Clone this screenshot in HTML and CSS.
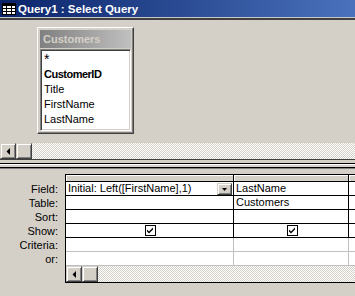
FILE: index.html
```html
<!DOCTYPE html>
<html lang="en">
<head>
    <meta charset="UTF-8">
    <title>Query1 : Select Query</title>
    <link rel="stylesheet" href="styles.css">
</head>
<body>
    <div class="titlebar">
        <svg class="app-icon" width="14" height="12" viewBox="0 0 14 12">
            <rect x="0.5" y="0.5" width="13" height="11" fill="#fff" stroke="#000"/>
            <rect x="1" y="1" width="12" height="2" fill="#000"/>
            <path d="M1 5.5H13M1 8.5H13M4.5 3V11M9.5 3V11" stroke="#000"/>
        </svg>
        <span class="title">Query1 : Select Query</span>
    </div>

    <!-- Table pane -->
    <div class="tables-pane">
        <div class="field-list">
            <div class="field-list-caption">Customers</div>
            <ul class="field-list-items">
                <li class="star">*</li>
                <li class="key">CustomerID</li>
                <li>Title</li>
                <li>FirstName</li>
                <li>LastName</li>
            </ul>
        </div>
    </div>
    <div class="hscroll">
        <div class="sb-btn">
            <svg width="4" height="7" viewBox="0 0 4 7"><path d="M4 0V7L0.5 3.5Z" fill="#000"/></svg>
        </div>
        <div class="sb-thumb"></div>
        <div class="sb-track"></div>
    </div>

    <div class="splitter"></div>

    <!-- Design grid -->
    <div class="design-pane">
        <div class="row-labels">
            <div>Field:</div>
            <div>Table:</div>
            <div>Sort:</div>
            <div>Show:</div>
            <div>Criteria:</div>
            <div>or:</div>
        </div>
        <div class="qbe-grid">
            <div class="col-head"></div>
            <div class="col-head"></div>
            <div class="col-head last"></div>

            <div class="cell field-cell">
                <span>Initial: Left([FirstName],1)</span>
                <span class="drop-btn">
                    <svg width="5" height="3" viewBox="0 0 5 3"><path d="M0 0H5L2.5 3Z" fill="#000"/></svg>
                </span>
            </div>
            <div class="cell">LastName</div>
            <div class="cell last"></div>

            <div class="cell"></div>
            <div class="cell">Customers</div>
            <div class="cell last"></div>

            <div class="cell"></div>
            <div class="cell"></div>
            <div class="cell last"></div>

            <div class="cell"><div class="checkbox"><svg width="7" height="7" viewBox="0 0 7 7"><path d="M0 2.5L2 4.5L6 0.5V2.5L2 6.5L0 4.5Z" fill="#000"/></svg></div></div>
            <div class="cell"><div class="checkbox"><svg width="7" height="7" viewBox="0 0 7 7"><path d="M0 2.5L2 4.5L6 0.5V2.5L2 6.5L0 4.5Z" fill="#000"/></svg></div></div>
            <div class="cell last"></div>

            <div class="cell soft"></div>
            <div class="cell soft"></div>
            <div class="cell soft last"></div>

            <div class="cell soft"></div>
            <div class="cell soft"></div>
            <div class="cell soft last"></div>

            <div class="hscroll grid-scroll">
                <div class="sb-btn">
                    <svg width="4" height="7" viewBox="0 0 4 7"><path d="M4 0V7L0.5 3.5Z" fill="#000"/></svg>
                </div>
                <div class="sb-thumb"></div>
                <div class="sb-track"></div>
            </div>
        </div>
    </div>
</body>
</html>
```

FILE: styles.css
```css
* {
    margin: 0;
    padding: 0;
    box-sizing: border-box;
}

body {
    width: 355px;
    height: 296px;
    overflow: hidden;
    background: #d4d0c8;
    font-family: "Liberation Sans", Arial, sans-serif;
    font-size: 11px;
    color: #000;
}

/* Title bar */
.titlebar {
    height: 18px;
    display: flex;
    align-items: center;
    gap: 2px;
    padding-left: 2px;
    background: linear-gradient(to right, #0a246a, #4a72bc);
    border-bottom: 1px solid #c8c8c8;
    color: #fff;
    font-weight: bold;
    font-size: 11.5px;
}

.app-icon {
    flex: none;
}

/* Upper pane with the field list */
.tables-pane {
    height: 125px;
    border-top: 2px solid #404040;
    position: relative;
}

.field-list {
    position: absolute;
    left: 37px;
    top: 7px;
    width: 97px;
    height: 107px;
    padding: 2px;
    background: #d4d0c8;
    border: 1px solid;
    border-color: #fff #404040 #404040 #fff;
    box-shadow: inset -1px -1px #808080;
}

.field-list-caption {
    height: 18px;
    line-height: 18px;
    margin-bottom: 1px;
    padding-left: 3px;
    background: linear-gradient(to right, #808080, #c0c0c0);
    color: #d4d0c8;
    font-weight: bold;
}

.field-list-items {
    list-style: none;
    height: 82px;
    padding: 2px 0 0 3px;
    background: #fff;
    border: 1px solid;
    border-color: #808080 #fff #fff #808080;
    box-shadow: inset 1px 1px #404040, inset -1px -1px #d4d0c8;
}

.field-list-items li {
    line-height: 15px;
    height: 15px;
}

.field-list-items .star {
    font-size: 14px;
}

.field-list-items .key {
    font-weight: bold;
    letter-spacing: -0.5px;
}

/* Scroll bars */
.hscroll {
    display: flex;
    height: 16px;
}

.sb-btn,
.sb-thumb {
    flex: none;
    width: 16px;
    height: 16px;
    background: #d4d0c8;
    border: 1px solid;
    border-color: #d4d0c8 #404040 #404040 #d4d0c8;
    box-shadow: inset 1px 1px #fff, inset -1px -1px #808080;
}

.sb-btn {
    display: flex;
    align-items: center;
    justify-content: center;
}

.sb-track {
    flex: 1;
    background: repeating-conic-gradient(#fff 0 25%, #d4d0c8 0 50%) 0 0 / 2px 2px;
}

.splitter {
    height: 10px;
    background: linear-gradient(to bottom,
        #404040 0 1px,
        #d4d0c8 1px 4px,
        #000 4px 5px,
        #fff 5px 6px,
        #d4d0c8 6px 8px,
        #000 8px 9px,
        #808080 9px 10px);
}

/* Lower pane: QBE grid */
.design-pane {
    display: flex;
    align-items: flex-start;
    padding-top: 5px;
}

.row-labels {
    flex: none;
    width: 65px;
    padding-top: 8px;
    padding-right: 7px;
    text-align: right;
}

.row-labels div {
    line-height: 14px;
}

.qbe-grid {
    flex: 1;
    display: grid;
    grid-template-columns: 168px 115px 1fr;
    grid-template-rows: 7px repeat(6, 14px) 16px;
    border-top: 1px solid #000;
    border-left: 1px solid #000;
    border-bottom: 1px solid #000;
    background: #fff;
}

.col-head {
    background: #d4d0c8;
    border-right: 1px solid #000;
    border-bottom: 1px solid #000;
    box-shadow: inset 1px 1px #fff;
}

.cell {
    border-right: 1px solid #000;
    border-bottom: 1px solid #000;
    padding-left: 2px;
    line-height: 13px;
    white-space: nowrap;
    overflow: hidden;
}

.cell.soft {
    border-color: #c0c0c0;
}

.cell.last,
.col-head.last {
    border-right: none;
}

.field-cell {
    display: flex;
    justify-content: space-between;
}

.drop-btn {
    flex: none;
    width: 15px;
    height: 12px;
    margin: 1px 1px 0 0;
    display: flex;
    align-items: center;
    justify-content: center;
    background: #d4d0c8;
    border: 1px solid;
    border-color: #d4d0c8 #404040 #404040 #d4d0c8;
    box-shadow: inset 1px 1px #fff, inset -1px -1px #808080;
}

.checkbox {
    width: 11px;
    height: 11px;
    margin: 1px auto 0;
    display: flex;
    align-items: center;
    justify-content: center;
    background: #fff;
    border: 1px solid #000;
}

.grid-scroll {
    grid-column: 1 / -1;
}
```
